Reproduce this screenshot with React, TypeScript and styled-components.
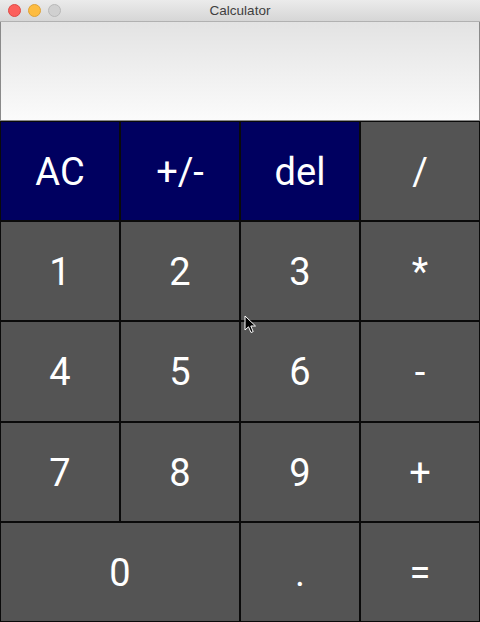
import React from "react";
import styled, { createGlobalStyle } from "styled-components";

const Global = createGlobalStyle`
  html, body { margin: 0; padding: 0; background: #ececec; }
  body { font-family: Roboto, "Liberation Sans", sans-serif; }
`;

const Window = styled.div`
  width: 480px;
  height: 622px;
  display: flex;
  flex-direction: column;
  position: relative;
  overflow: hidden;
`;

const TitleBar = styled.div`
  height: 21px;
  flex: 0 0 21px;
  display: flex;
  align-items: center;
  position: relative;
  background: linear-gradient(#ebebeb, #d6d6d6);
  border-bottom: 1px solid #b1b1b1;
`;

const Lights = styled.div`
  display: flex;
  gap: 7px;
  padding-left: 7.5px;
`;

const Light = styled.span<{ $c: string; $b: string }>`
  width: 13px;
  height: 13px;
  border-radius: 50%;
  background: ${(p) => p.$c};
  box-sizing: border-box;
  border: 0.5px solid ${(p) => p.$b};
`;

const Title = styled.div`
  position: absolute;
  left: 0;
  right: 0;
  text-align: center;
  font-family: "Liberation Sans", Arial, sans-serif;
  font-size: 13.5px;
  color: #404040;
  pointer-events: none;
`;

const Display = styled.div`
  height: 99px;
  flex: 0 0 99px;
  background: linear-gradient(#e3e3e3, #fbfbfb);
  border: 1px solid #8a8a8a;
  border-top: none;
  box-sizing: border-box;
`;

const Pad = styled.div`
  flex: 1;
  display: grid;
  grid-template-columns: repeat(4, 1fr);
  grid-template-rows: repeat(5, 1fr);
  background: #000;
`;

const Key = styled.div<{ $fn?: boolean; $span?: number }>`
  grid-column: span ${(p) => p.$span ?? 1};
  background: ${(p) => (p.$fn ? "#000060" : "#545454")};
  border: 1px solid #0a0a0a;
  color: #fff;
  font-family: Roboto, "Liberation Sans", sans-serif;
  font-size: 38px;
  display: flex;
  align-items: center;
  justify-content: center;
  padding-top: 2px;
  box-sizing: border-box;
`;

const Cursor = styled.svg`
  position: absolute;
  left: 244px;
  top: 315px;
`;

const keys: { l: string; fn?: boolean; span?: number }[] = [
  { l: "AC", fn: true },
  { l: "+/-", fn: true },
  { l: "del", fn: true },
  { l: "/" },
  { l: "1" },
  { l: "2" },
  { l: "3" },
  { l: "*" },
  { l: "4" },
  { l: "5" },
  { l: "6" },
  { l: "-" },
  { l: "7" },
  { l: "8" },
  { l: "9" },
  { l: "+" },
  { l: "0", span: 2 },
  { l: "." },
  { l: "=" },
];

export default function App() {
  return (
    <>
      <Global />
      <Window>
        <TitleBar>
          <Lights>
            <Light $c="#fc605c" $b="#de4a45" />
            <Light $c="#fdbc40" $b="#dea236" />
            <Light $c="#d0d0d0" $b="#b8b8b8" />
          </Lights>
          <Title>Calculator</Title>
        </TitleBar>
        <Display />
        <Pad>
          {keys.map((k, i) => (
            <Key key={i} $fn={k.fn} $span={k.span}>
              {k.l}
            </Key>
          ))}
        </Pad>
        <Cursor width="14" height="20" viewBox="0 0 14 20">
          <path
            d="M1 1 L1 15 L4.5 11.8 L7 17.5 L9.2 16.6 L6.8 11 L11.5 11 Z"
            fill="#000"
            stroke="#fff"
            strokeWidth="1"
            strokeLinejoin="round"
          />
        </Cursor>
      </Window>
    </>
  );
}
